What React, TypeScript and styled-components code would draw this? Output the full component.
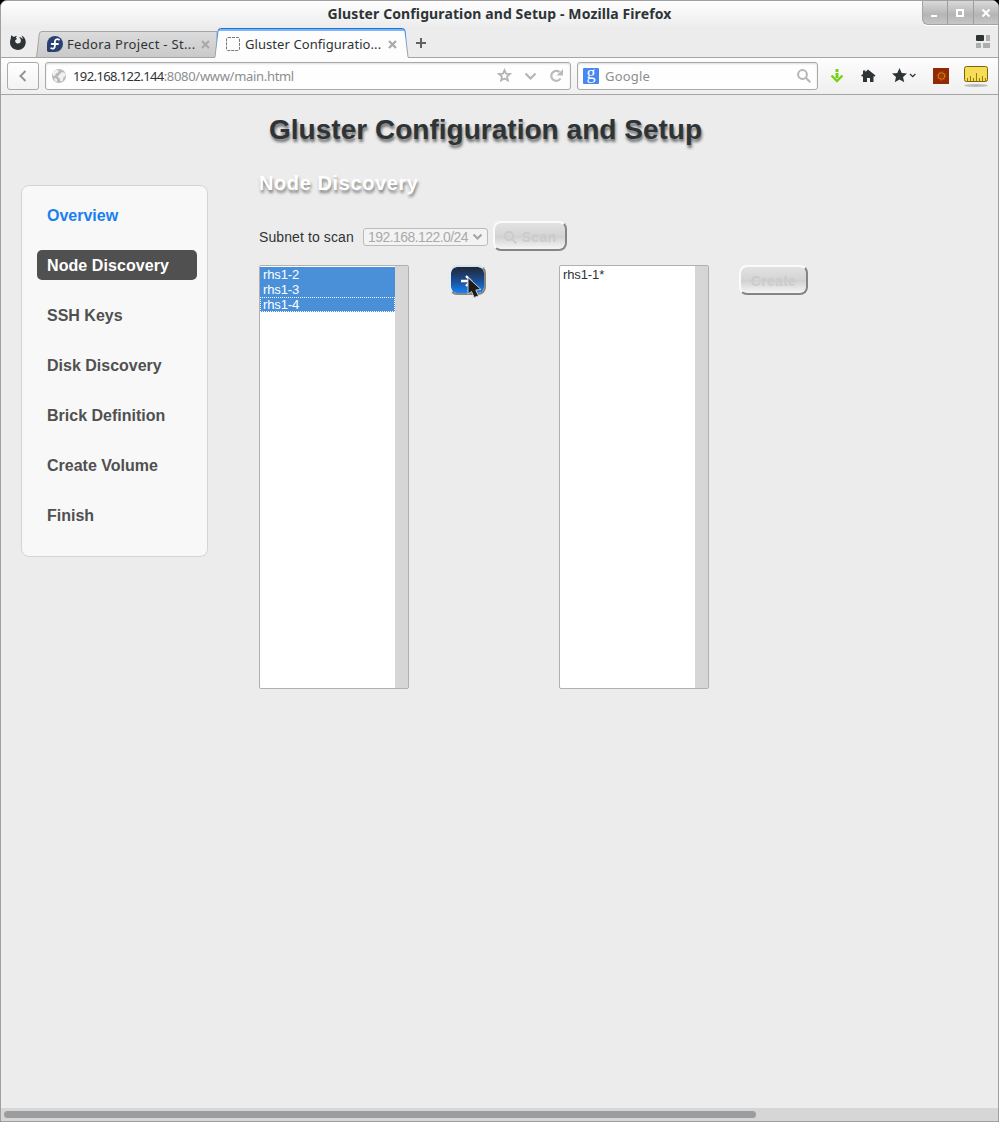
import React from "react";
import styled, { createGlobalStyle, css } from "styled-components";

const Global = createGlobalStyle`
  * { box-sizing: border-box; }
  html, body { margin: 0; padding: 0; overflow: hidden; background: #000; }
  ul, h1, h2 { margin: 0; padding: 0; list-style: none; }
  svg { display: block; flex: none; }
`;

const uiFont = `"Noto Sans", "Open Sans", sans-serif`;
const pageFont = `"Liberation Sans", Arial, sans-serif`;

const Window = styled.div`
  width: 999px;
  height: 1122px;
  display: flex;
  flex-direction: column;
  border: 1px solid #a0a0a0;
  border-radius: 7px 7px 0 0;
  overflow: hidden;
  background: #ededed;
`;

const Chrome = styled.header`
  flex: none;
  font-family: ${uiFont};
  color: #2e3436;
  background: linear-gradient(#fefefe, #ececec 27px, #ececec);
`;

const TitleBar = styled.div`
  height: 27px;
  display: grid;
  grid-template-columns: 76px 1fr 76px;
`;

const Title = styled.div`
  grid-column: 2;
  text-align: center;
  font-size: 14px;
  font-weight: 700;
  line-height: 25px;
  letter-spacing: 0.11px;
  white-space: nowrap;
`;

const Controls = styled.div`
  height: 24px;
  display: flex;
  border: 1px solid #a4a4a4;
  border-width: 0 0 1px 1px;
  border-radius: 0 0 0 6px;
  background: linear-gradient(#d9d9d9, #b5b5b5 60%, #c6c6c6);
  box-shadow: 0 1px 0 #fff;
`;

const Control = styled.div`
  flex: 1;
  display: grid;
  place-items: center;
  & + & { border-left: 1px solid #9d9d9d; }
`;

const TabStrip = styled.div`
  height: 30px;
  display: flex;
  align-items: flex-end;
  border-bottom: 1px solid #a5a5a5;
`;

const MenuMark = styled.div`
  width: 35px;
  align-self: center;
  padding: 0 0 1px 8px;
`;

const Tab = styled.div<{ $active?: boolean }>`
  flex: none;
  display: grid;
  width: ${(p) => (p.$active ? 195 : 181)}px;
  height: ${(p) => (p.$active ? 30 : 27)}px;
  margin: ${(p) => (p.$active ? "0 0 -1px -3px" : "0 0 -1px 0")};
  & > * { grid-area: 1 / 1; }
`;

const TabLabel = styled.div<{ $active?: boolean }>`
  display: flex;
  align-items: center;
  font-size: 13px;
  white-space: nowrap;
  padding: ${(p) => (p.$active ? "2px 12px 0 12px" : "0 7px 1px 11px")};
  gap: ${(p) => (p.$active ? 5 : 4)}px;
  z-index: 1;
  span { flex: 1; letter-spacing: ${(p) => (p.$active ? "0.07px" : "0.32px")}; }
`;

const NewTab = styled.div`
  align-self: center;
  margin-left: 6px;
`;

const Groups = styled.div`
  align-self: center;
  margin: 0 7px 1px auto;
`;

const Toolbar = styled.div`
  height: 37px;
  display: flex;
  align-items: center;
  padding: 0 9px 1px 6px;
  background: linear-gradient(#fdfdfd, #efefef);
  border-bottom: 1px solid #a5a5a5;
`;

const BackButton = styled.div`
  width: 32px;
  height: 28px;
  margin-right: 6px;
  display: grid;
  place-items: center;
  border: 1px solid #aaa;
  border-radius: 3px;
  background: linear-gradient(#fff, #f3f3f3);
`;

const Field = styled.div<{ $width: number }>`
  width: ${(p) => p.$width}px;
  height: 28px;
  display: flex;
  align-items: center;
  flex: none;
  padding: 0 6px 0 5px;
  margin-right: 6px;
  border: 1px solid #a9a9a9;
  border-radius: 3px;
  background: #fefefe;
  box-shadow: inset 0 1px 2px #ddd;
  font-size: 13px;
  color: #8b8e8f;
`;

const Address = styled.div`
  flex: 1;
  margin-left: 6px;
  letter-spacing: -0.31px;
  white-space: nowrap;
  b { color: #2e3436; font-weight: 400; letter-spacing: -0.6px; }
`;

const Placeholder = styled(Address)`
  letter-spacing: 0.2px;
`;

const FieldIcons = styled.div`
  display: flex;
  gap: 12px;
  align-items: center;
`;

const EngineBadge = styled.div`
  width: 16px;
  height: 16px;
  border-radius: 1px;
  background: #4787f2;
  color: #fff;
  font: 18px/11px "Liberation Serif", serif;
  text-align: center;
`;

const Tools = styled.div`
  flex: 1;
  display: flex;
  align-items: center;
  justify-content: space-between;
  padding-left: 6px;
`;

const Page = styled.main`
  flex: 1;
  font-family: ${pageFont};
  color: #2e3436;
  background: #ececec;
`;

const Heading = styled.h1`
  padding: 19px 0 0 268px;
  font-size: 28px;
  line-height: 32px;
  font-weight: 700;
  letter-spacing: 0.02px;
  white-space: nowrap;
  text-shadow: 1px 3px 3px rgba(0, 0, 0, 0.55);
`;

const Columns = styled.div`
  display: flex;
  align-items: flex-start;
  padding: 24px 0 0 20px;
`;

const Sidebar = styled.ul`
  width: 187px;
  height: 372px;
  margin-top: 15px;
  padding: 14px 10px 0 15px;
  display: flex;
  flex-direction: column;
  gap: 20px;
  border: 1px solid #d4d4d4;
  border-radius: 8px;
  background: #f8f8f8;
`;

const Step = styled.li<{ $state?: "done" | "current" }>`
  width: 160px;
  height: 30px;
  padding-left: 10px;
  flex: none;
  border-radius: 5px;
  font-size: 16px;
  line-height: 32px;
  font-weight: 700;
  color: #505050;
  ${(p) => p.$state === "done" && css`color: #1a7ff0;`}
  ${(p) => p.$state === "current" && css`color: #fff; background: #505050; letter-spacing: 0.08px;`}
`;

const Content = styled.section`
  margin-left: 51px;
`;

const SectionTitle = styled.h2`
  font-size: 20px;
  line-height: 26px;
  letter-spacing: 0.6px;
  color: #fff;
  text-shadow: 1px 3px 3px rgba(0, 0, 0, 0.45);
`;

const ScanRow = styled.div`
  height: 30px;
  margin-top: 25px;
  display: flex;
  align-items: center;
`;

const Label = styled.span`
  width: 104px;
  font-size: 14px;
  letter-spacing: 0.1px;
  padding-top: 2px;
`;

const Select = styled.div`
  width: 125px;
  height: 18px;
  margin: 2px 5px 0 0;
  padding: 0 4px 0 4px;
  display: flex;
  align-items: center;
  justify-content: space-between;
  border: 1px solid #bbb;
  border-radius: 3px;
  background: #f3f3f3;
  color: #aaa;
  font-size: 14px;
  letter-spacing: -0.56px;
`;

const PushButton = styled.button<{ $width: number; $primary?: boolean }>`
  width: ${(p) => p.$width}px;
  height: 30px;
  padding: 2px 0 0;
  display: flex;
  align-items: center;
  justify-content: center;
  gap: 5px;
  border: 2px solid;
  border-color: #fafafa #858585 #858585 #fafafa;
  border-radius: 8px;
  font: 700 14px ${pageFont};
  letter-spacing: 0.3px;
  color: #cbcbcb;
  background: linear-gradient(#e2e2e2, #d5d5d5 48%, #cfcfcf 50%, #f5f5f5) padding-box;
  ${(p) => p.$primary && css`
    padding: 0 1px 0 0;
    border-color: #d5e2ef #858585 #858585 #e4edf6;
    background: linear-gradient(#202833, #1c4c91 52%, #1683f8) padding-box;
  `}
`;

const Lists = styled.div`
  display: flex;
  align-items: flex-start;
  margin-top: 14px;
`;

const ListBox = styled.div`
  width: 150px;
  height: 424px;
  display: flex;
  border: 1px solid #b0b0b0;
  border-radius: 2px;
  background: #fff;
`;

const Options = styled.ul`
  flex: 1;
  padding-top: 1px;
`;

const Option = styled.li<{ $selected?: boolean; $focus?: boolean }>`
  height: 15px;
  padding-left: 3px;
  font-size: 13px;
  line-height: 15px;
  letter-spacing: -0.12px;
  ${(p) => p.$selected && css`background: #4a90d9; color: #fff;`}
  ${(p) => p.$focus && css`outline: 1px dotted #fff; outline-offset: -1px;`}
`;

const Gutter = styled.div`
  width: 13px;
  background: #d6d6d6;
`;

const Transfer = styled.div`
  position: relative;
  width: 150px;
  padding-left: 40px;
`;

const Pointer = styled.svg`
  position: absolute;
  left: 58px;
  top: 11px;
`;

const CreateSlot = styled.div`
  padding-left: 30px;
`;

const ScrollTrack = styled.div`
  height: 13px;
  flex: none;
  padding: 3px;
  background: #d6d6d6;
`;

const ScrollThumb = styled.div`
  width: 752px;
  height: 7px;
  border-radius: 4px;
  background: #9b9c9d;
`;

const CloseMark = () => (
  <svg width="9" height="9" viewBox="0 0 9 9">
    <path d="M1 1l7 7M8 1L1 8" stroke="#a9a9a9" strokeWidth="2.2" />
  </svg>
);

const Lens = ({ size, color, width }: { size: number; color: string; width: number }) => (
  <svg width={size} height={size} viewBox="0 0 14 14" fill="none" stroke={color} strokeWidth={width}>
    <circle cx="5.5" cy="5.5" r="4.4" />
    <path d="M8.8 8.8L13.3 13.3" />
  </svg>
);

const BrowserMark = () => (
  <svg width="18" height="17" viewBox="0 0 18 17">
    <path
      d="M2.2 1.2L4.8 3C6 2 7 1.8 8 2L6.8 3.4L8 5L6.2 6.3C6 7.6 6.6 9 8.2 9.4C10 9.9 11.4 9 11.8 7.6C12.2 6 11.4 4.2 10 3C12 3.1 13.2 4.2 13.7 5.2C13.8 3.8 13.2 2.6 12.2 1.6C15.2 2.6 17 5.4 16.7 8.8C16.3 13 13 16 9 16C4.6 16 1 12.8 1 8.6C1 7 1.2 5.8 1.7 4.8Z"
      fill="#2e3436"
    />
  </svg>
);

const FedoraMark = () => (
  <svg width="16" height="16" viewBox="0 0 16 16">
    <path d="M8 0a8 8 0 1 1 0 16H1.4A1.4 1.4 0 0 1 0 14.600V8A8 8 0 0 1 8 0z" fill="#294172" />
    <path
      d="M12 3.6C9.700 2.500 7.900 3.700 7.900 5.600V10.100C7.900 12.300 6.100 13.200 4.200 12.300M4.700 8H11"
      fill="none" stroke="#fff" strokeWidth="1.8" strokeLinecap="round"
    />
  </svg>
);

const Globe = () => (
  <svg width="16" height="16" viewBox="0 0 16 16">
    <circle cx="8" cy="8" r="7" fill="#b9b9b9" />
    <path d="M2 4l3-2 3 .5-1 2-2 1-1 2-2 .5zM8 7l3-3 3 1 .6 3-2 1-1 4-2 .5-1-3-2-2zM3 10l3 1 0 3-2-1z" fill="#f1f1f1" />
  </svg>
);

const steps: { name: string; state?: "done" | "current" }[] = [
  { name: "Overview", state: "done" },
  { name: "Node Discovery", state: "current" },
  { name: "SSH Keys" },
  { name: "Disk Discovery" },
  { name: "Brick Definition" },
  { name: "Create Volume" },
  { name: "Finish" },
];

export default function App() {
  return (
    <>
      <Global />
      <Window>
        <Chrome>
          <TitleBar>
            <Title>Gluster Configuration and Setup - Mozilla Firefox</Title>
            <Controls>
              <Control>
                <svg width="10" height="10"><path d="M1 8h6" stroke="#fff" strokeWidth="2" /></svg>
              </Control>
              <Control>
                <svg width="10" height="10"><rect x="2" y="2" width="6" height="6" fill="none" stroke="#fff" strokeWidth="2" /></svg>
              </Control>
              <Control>
                <svg width="10" height="10"><path d="M1.500 1.500l7 7M8.500 1.500l-7 7" stroke="#fff" strokeWidth="2.2" /></svg>
              </Control>
            </Controls>
          </TitleBar>
          <TabStrip>
            <MenuMark><BrowserMark /></MenuMark>
            <Tab>
              <svg width="181" height="27">
                <defs>
                  <linearGradient id="idle" x1="0" y1="0" x2="0" y2="1">
                    <stop offset="0" stopColor="#dcdcdc" />
                    <stop offset="1" stopColor="#c9c9c9" />
                  </linearGradient>
                </defs>
                <path d="M.5 26.500L3.300 3Q3.600 .5 6 .5H181V26.500z" fill="url(#idle)" stroke="#a5a5a5" />
              </svg>
              <TabLabel>
                <FedoraMark />
                <span>Fedora Project - St...</span>
                <CloseMark />
              </TabLabel>
            </Tab>
            <Tab $active>
              <svg width="195" height="30">
                <path d="M1 30L4 3Q4.300 1 6.500 1H188.500Q190.700 1 191 3L194 30" fill="#fdfdfd" />
                <path d="M5 2H190" stroke="#7db5f5" strokeWidth="2" />
                <path d="M1 29L4 3Q4.300 .5 6.500 .5H188.500Q190.700 .5 191 3L194 29" fill="none" stroke="url(#edge)" />
                <defs>
                  <linearGradient id="edge" x1="0" y1="0" x2="0" y2="1">
                    <stop offset="0" stopColor="#1a73d9" />
                    <stop offset=".4" stopColor="#6ba2dc" />
                    <stop offset="1" stopColor="#a5a5a5" />
                  </linearGradient>
                </defs>
              </svg>
              <TabLabel $active>
                <svg width="14" height="14"><rect x=".5" y=".5" width="13" height="13" rx="1.500" fill="none" stroke="#777" strokeDasharray="3 1" /></svg>
                <span>Gluster Configuratio...</span>
                <CloseMark />
              </TabLabel>
            </Tab>
            <NewTab>
              <svg width="12" height="12"><path d="M6 1v10M1 6h10" stroke="#606364" strokeWidth="2" /></svg>
            </NewTab>
            <Groups>
              <svg width="16" height="14">
                <rect x="1" y="0" width="8" height="6" rx="1" fill="#2e3436" />
                <path d="M11 0h4v6h-4zM1 8h5v5H1zM8 8h7v5H8z" fill="#adadad" />
              </svg>
            </Groups>
          </TabStrip>
          <Toolbar>
            <BackButton>
              <svg width="8" height="12"><path d="M6.500 1L1.500 6l5 5" fill="none" stroke="#939595" strokeWidth="2" /></svg>
            </BackButton>
            <Field $width={526}>
              <Globe />
              <Address><b>192.168.122.144</b>:8080/www/main.html</Address>
              <FieldIcons>
                <svg width="15" height="15" viewBox="0 0 15 15"><path d="M7.500 2.200L9 5.700l4 .3-3 2.500.9 4-3.400-2.100-3.400 2.100.9-4L2 6l4-.3z" fill="none" stroke="#b1b3b3" strokeWidth="1.700" /></svg>
                <svg width="13" height="8"><path d="M1.500 1.500l5 5 5-5" fill="none" stroke="#b1b3b3" strokeWidth="2" /></svg>
                <svg width="15" height="14"><path d="M11.500 9.500A5 5 0 1 1 10.500 3" fill="none" stroke="#b9bbbb" strokeWidth="2.200" /><path d="M14 0v6.500H7.500z" fill="#b9bbbb" /></svg>
              </FieldIcons>
            </Field>
            <Field $width={241}>
              <EngineBadge>g</EngineBadge>
              <Placeholder>Google</Placeholder>
              <Lens size={14} color="#b4b6b6" width={2} />
            </Field>
            <Tools>
              <svg width="14" height="16"><path d="M5.500 1h3v3h-3zM5.500 5h3v5h-3z" fill="#73d216" /><path d="M1.500 7.500L7 13l5.500-5.500" fill="none" stroke="#73d216" strokeWidth="2.400" /></svg>
              <svg width="16" height="14"><path d="M8 .5l7.500 6-1.200 1.300L13.500 7v6H10V9H7v4H3V7l-.8.800L1 6.500 3 5V1.500h2.500v1.500z" fill="#2e3436" /></svg>
              <svg width="24" height="15"><path d="M7.500 0l2.200 4.900 5.300.5-4 3.700 1.200 5.200-4.700-2.800-4.700 2.800L4 9.100 0 5.400l5.300-.5z" fill="#2e3436" /><path d="M18 6l2.700 2.700L23.400 6" fill="none" stroke="#2e3436" strokeWidth="1.300" /></svg>
              <svg width="16" height="16" overflow="visible"><g transform="translate(2 0)"><path d="M0 0h16v16H0z" fill="#902a04" /><circle cx="8.500" cy="8" r="3.300" fill="#9f3909" stroke="#dc7b14" /><circle cx="8.500" cy="8" r="4.300" fill="none" stroke="#dc7b14" strokeDasharray="1 2.380" /></g></svg>
              <svg width="26" height="22">
                <ellipse cx="13" cy="20.500" rx="12" ry="1.500" fill="#bbb" />
                <rect x="1.500" y="1.500" width="23" height="15" rx="2" fill="#f5dd57" stroke="#7c6508" />
                <path d="M4.500 16v-3M7.500 16v-5M10.500 16v-3M13.500 16V8M16.500 16v-3M19.500 16v-5M22.500 16v-3" stroke="#9b7d05" />
              </svg>
            </Tools>
          </Toolbar>
        </Chrome>
        <Page>
          <Heading>Gluster Configuration and Setup</Heading>
          <Columns>
            <Sidebar>
              {steps.map((s) => <Step key={s.name} $state={s.state}>{s.name}</Step>)}
            </Sidebar>
            <Content>
              <SectionTitle>Node Discovery</SectionTitle>
              <ScanRow>
                <Label>Subnet to scan</Label>
                <Select>
                  192.168.122.0/24
                  <svg width="11" height="8"><path d="M1.500 1.500l4 4 4-4" fill="none" stroke="#a5a5a5" strokeWidth="2.200" /></svg>
                </Select>
                <PushButton $width={74}>
                  <Lens size={13} color="#cbcbcb" width={2} />
                  Scan
                </PushButton>
              </ScanRow>
              <Lists>
                <ListBox>
                  <Options>
                    <Option $selected>rhs1-2</Option>
                    <Option $selected>rhs1-3</Option>
                    <Option $selected $focus>rhs1-4</Option>
                  </Options>
                  <Gutter />
                </ListBox>
                <Transfer>
                  <PushButton $width={37} $primary>
                    <svg width="14" height="14"><path d="M1 8h10M6 3l5 5-5 5" fill="none" stroke="#fff" strokeWidth="2.400" /></svg>
                  </PushButton>
                  <Pointer width="16" height="24" viewBox="0 0 16 24">
                    <path d="M1 1.500V18l3.500-2.500 2.700 6 4.300-1.700-2.700-5.800 5.200-.5z" fill="#1c1c1c" stroke="#c8c8c8" />
                  </Pointer>
                </Transfer>
                <ListBox>
                  <Options><Option>rhs1-1*</Option></Options>
                  <Gutter />
                </ListBox>
                <CreateSlot><PushButton $width={69}>Create</PushButton></CreateSlot>
              </Lists>
            </Content>
          </Columns>
        </Page>
        <ScrollTrack><ScrollThumb /></ScrollTrack>
      </Window>
    </>
  );
}
